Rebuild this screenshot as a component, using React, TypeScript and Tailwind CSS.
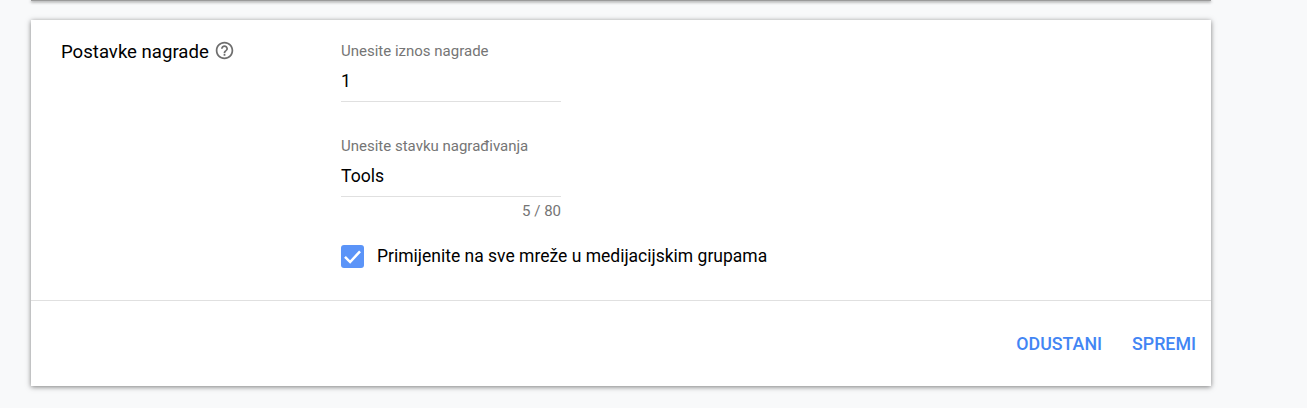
import React from "react";

const HelpIcon = () => (
  <svg width="21" height="21" viewBox="0 0 24 24" fill="#6e6e6e" className="shrink-0 -mt-[1px]">
    <path d="M11 18h2v-2h-2v2zm1-16C6.48 2 2 6.48 2 12s4.48 10 10 10 10-4.48 10-10S17.52 2 12 2zm0 18c-4.41 0-8-3.59-8-8s3.59-8 8-8 8 3.59 8 8-3.59 8-8 8zm0-14c-2.21 0-4 1.79-4 4h2c0-1.1.9-2 2-2s2 .9 2 2c0 2-3 1.75-3 5h2c0-2.25 3-2.5 3-5 0-2.21-1.79-4-4-4z" />
  </svg>
);

const Campo = ({ label, valor }: { label: string; valor: string }) => (
  <div className="w-[220px]">
    <div className="text-[15px] leading-[20px] text-[#757575] whitespace-nowrap">{label}</div>
    <div className="h-[41px] pt-[10px] text-[17.6px] leading-[20px] text-black border-b border-[#e0e0e0]">{valor}</div>
  </div>
);

export default function App() {
  return (
    <div className="h-[408px] overflow-hidden bg-[#f8f9fa] font-['Roboto',sans-serif]">
      <div className="h-[1px] ml-[31px] w-[1180px] bg-[#9a9a9a] shadow-[0_1px_3px_rgba(0,0,0,0.7)]" />
      <div className="mt-[19px] ml-[31px] w-[1180px] h-[366px] bg-white shadow-[0_1px_5px_rgba(0,0,0,0.5)] flex flex-col">
        <div className="h-[281px] flex border-b border-[#e0e0e0]">
          <div className="w-[310px] pl-[30px] pt-[21px] flex items-start gap-[5px]">
            <span className="text-[18.6px] leading-[22px] text-black whitespace-nowrap">Postavke nagrade</span>
            <HelpIcon />
          </div>
          <div className="pt-[21px]">
            <Campo label="Unesite iznos nagrade" valor="1" />
            <div className="h-[34px]" />
            <Campo label="Unesite stavku nagrađivanja" valor="Tools" />
            <div className="w-[220px] mt-[5px] text-right text-[15px] leading-[18px] text-[#757575]">5 / 80</div>
            <div className="mt-[24px] flex items-center gap-[13px]">
              <div className="w-[23px] h-[23px] rounded-[3px] bg-[#5b94f8] flex items-center justify-center">
                <svg width="19" height="19" viewBox="0 0 24 24" fill="none" stroke="white" strokeWidth="3.2">
                  <path d="M2.5 12.5l6.5 6.5L21.5 5.5" />
                </svg>
              </div>
              <span className="text-[17.5px] leading-[24px] text-black whitespace-nowrap">Primijenite na sve mreže u medijacijskim grupama</span>
            </div>
          </div>
        </div>
        <div className="flex-1 flex justify-end gap-[30px] pr-[15px] pt-[32px]">
          <button className="h-[22px] text-[17.8px] font-medium leading-[22px] text-[#4285f4]">ODUSTANI</button>
          <button className="h-[22px] text-[17.8px] font-medium leading-[22px] text-[#4285f4]">SPREMI</button>
        </div>
      </div>
    </div>
  );
}
